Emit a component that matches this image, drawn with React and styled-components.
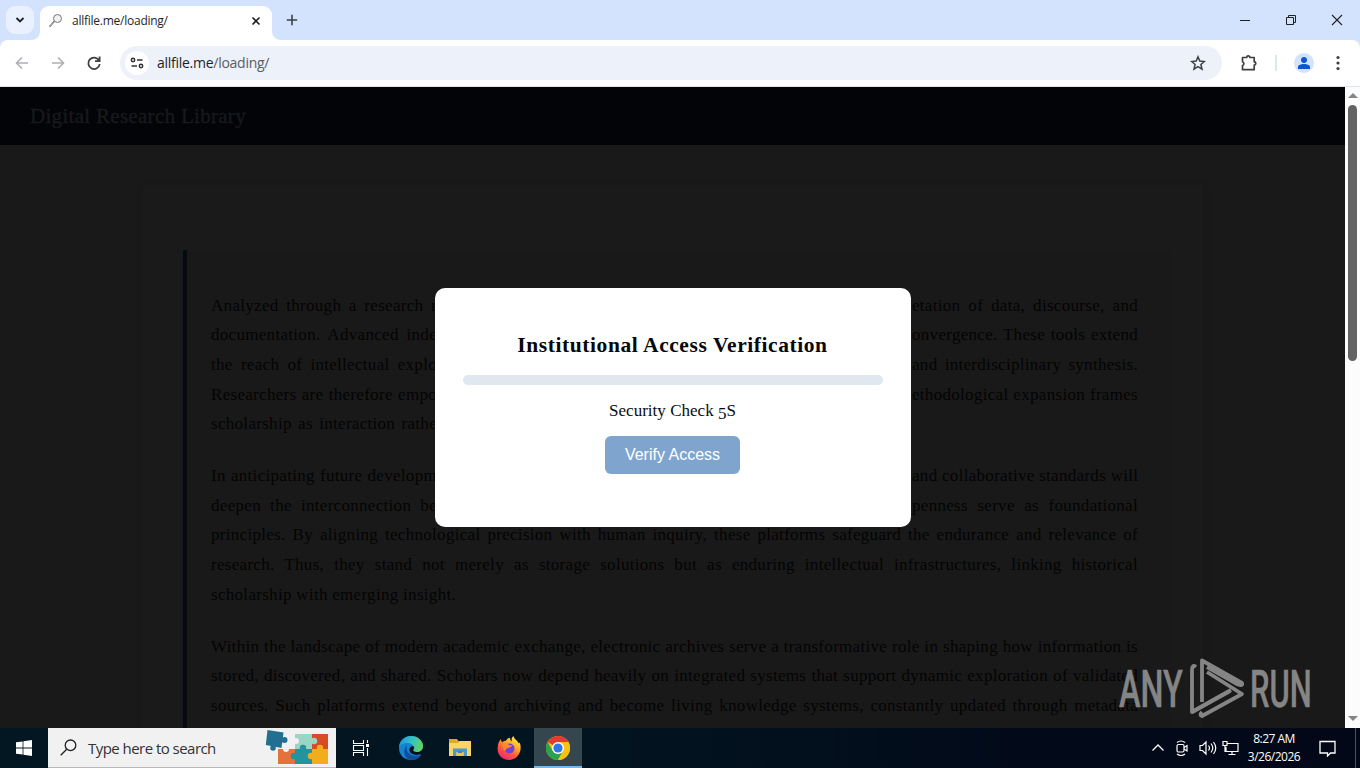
import React from "react";
import styled, { createGlobalStyle } from "styled-components";

const GlobalStyle = createGlobalStyle`
  * {
    box-sizing: border-box;
  }
  body {
    margin: 0;
    overflow: hidden;
    background: #191919;
  }
  svg {
    display: block;
    flex: none;
  }
`;

const uiFont = `"Open Sans", "Noto Sans", sans-serif`;
const serifFont = `"Liberation Serif", serif`;

const Screen = styled.div`
  display: flex;
  flex-direction: column;
  width: 1360px;
  height: 768px;
  overflow: hidden;
  font-family: ${uiFont};
`;

/* browser chrome */
const Chromium = styled.div`
  background: #d3e3fd;
`;
const TabStrip = styled.div`
  display: flex;
  height: 40px;
  padding: 6px 0 0 6px;
`;
const TabSearch = styled.div`
  display: flex;
  align-items: center;
  justify-content: center;
  width: 28px;
  height: 28px;
  border-radius: 9px;
  background: #e9f1fe;
`;
const Tab = styled.div`
  position: relative;
  display: flex;
  align-items: center;
  width: 232px;
  height: 34px;
  margin-left: 6px;
  padding: 0 10px 5px 8px;
  border-radius: 9px 9px 0 0;
  background: #fff;
  &::before,
  &::after {
    content: "";
    position: absolute;
    bottom: 0;
    width: 8px;
    height: 8px;
  }
  &::before {
    left: -8px;
    background: radial-gradient(circle at 0 0, transparent 7.5px, #fff 8px);
  }
  &::after {
    right: -8px;
    background: radial-gradient(circle at 100% 0, transparent 7.5px, #fff 8px);
  }
`;
const TabTitle = styled.span`
  flex: 1;
  margin-left: 8px;
  font-size: 12px;
  letter-spacing: -0.25px;
  white-space: nowrap;
  color: #1f1f1f;
`;
const NewTab = styled.div`
  margin: 8px 0 0 14px;
`;
const WindowButtons = styled.div`
  display: flex;
  align-items: center;
  gap: 34px;
  height: 28px;
  margin-left: auto;
  padding-right: 17px;
`;
const Toolbar = styled.div`
  display: flex;
  align-items: center;
  height: 47px;
  padding: 0 14px 0 14px;
  background: #fff;
  border-radius: 8px 8px 0 0;
  border-bottom: 1px solid #dfe3ea;
`;
const NavIcons = styled.div`
  display: flex;
  align-items: center;
  gap: 20px;
`;
const AddressBar = styled.div`
  display: flex;
  align-items: center;
  width: 1102px;
  height: 34px;
  margin-left: 18px;
  padding: 0 16px 0 5px;
  border-radius: 17px;
  background: #edf1fa;
`;
const SiteInfo = styled.div`
  display: flex;
  align-items: center;
  justify-content: center;
  width: 24px;
  height: 24px;
  border-radius: 50%;
  background: #fff;
`;
const Url = styled.span`
  flex: 1;
  margin: -1px 0 0 8px;
  font-size: 14px;
  letter-spacing: -0.27px;
  color: #1f1f1f;
  span {
    color: #5a5d61;
  }
`;
const ToolbarEnd = styled.div`
  display: flex;
  align-items: center;
  flex: 1;
  padding-left: 18px;
`;
const Divider = styled.div`
  width: 2px;
  height: 16px;
  margin: 0 17px;
  background: #dfe5f0;
`;
const Avatar = styled.div`
  display: flex;
  align-items: center;
  justify-content: center;
  width: 20px;
  height: 20px;
  margin-right: auto;
  border-radius: 50%;
  background: #d3e3fd;
`;

/* page */
const Viewport = styled.div`
  position: relative;
  display: flex;
  height: 641px;
  overflow: hidden;
`;
const Page = styled.div`
  flex: 1;
  background: #191919;
  font-family: ${serifFont};
`;
const Header = styled.header`
  display: flex;
  align-items: center;
  height: 58px;
  padding: 0 30px;
  background: #020408;
`;
const SiteName = styled.div`
  font-size: 21px;
  letter-spacing: 0.3px;
  color: #17191c;
  -webkit-text-stroke: 0.4px #17191c;
`;
const Sheet = styled.main`
  width: 1060px;
  height: 583px;
  margin: 40px 0 0 143px;
  padding: 65px 32px 0 40px;
  background: #1a1a1a;
  box-shadow: 0 0 8px rgba(0, 0, 0, 0.08);
`;
const Article = styled.article`
  height: 520px;
  padding: 40.8px 33px 0 24px;
  border-left: 4px solid #040a0f;
  background: #191919;
`;
const Paragraph = styled.div`
  margin-bottom: 22.4px;
`;
const Line = styled.div`
  display: flex;
  justify-content: space-between;
  height: 29.6px;
  font-size: 17px;
  line-height: 29.6px;
  color: #040404;
`;
const Segment = styled.span`
  width: ${({ $width }) => $width}px;
  text-align: justify;
  text-align-last: justify;
  white-space: nowrap;
  letter-spacing: 0.3px;
`;

const ScrollTrack = styled.div`
  display: flex;
  flex-direction: column;
  align-items: center;
  width: 15px;
  padding: 6px 0 7px;
  background: #fcfcfc;
`;
const ScrollThumb = styled.div`
  width: 9px;
  height: 256px;
  margin: 7px 0 auto;
  border-radius: 5px;
  background: #636363;
`;
const ScrollArrow = styled.div`
  border: 5px solid transparent;
  border-top-width: ${({ $down }) => ($down ? 5 : 0)}px;
  border-bottom-width: ${({ $down }) => ($down ? 0 : 5)}px;
  border-${({ $down }) => ($down ? "top" : "bottom")}-color: #858585;
`;

const Modal = styled.div`
  position: absolute;
  left: 435px;
  top: 201px;
  display: flex;
  flex-direction: column;
  align-items: center;
  width: 476px;
  height: 239px;
  padding: 45px 29px 0 28px;
  border-radius: 10px;
  background: #fff;
  font-family: ${serifFont};
`;
const ModalTitle = styled.h3`
  margin: 0;
  font-size: 21.5px;
  line-height: 24px;
  letter-spacing: 0.57px;
  white-space: nowrap;
  color: #080808;
`;
const Progress = styled.div`
  width: 420px;
  height: 10px;
  margin-top: 18px;
  border-radius: 5px;
  background: #e1e7ef;
`;
const Status = styled.p`
  margin: 16px 0 0;
  font-size: 17px;
  line-height: 20px;
  letter-spacing: 0.02px;
  color: #0c0c0c;
  span {
    vertical-align: -3px;
    line-height: 0;
  }
`;
const VerifyButton = styled.button`
  width: 135px;
  height: 38px;
  margin-top: 15px;
  padding: 0;
  border: none;
  border-radius: 6px;
  background: #7fa5cf;
  color: #fff;
  font-family: "Liberation Sans", sans-serif;
  font-size: 16px;
`;
const Watermark = styled.div`
  position: absolute;
  left: 1110px;
  top: 563px;
`;

/* taskbar */
const Taskbar = styled.div`
  display: flex;
  height: 40px;
  background: linear-gradient(90deg, #021722 0%, #02141f 45%, #020a1a 75%, #020818 100%);
`;
const TaskButton = styled.div`
  display: flex;
  align-items: center;
  justify-content: center;
  width: ${({ $width }) => $width || 49}px;
  height: 40px;
  background: ${({ $active }) => ($active ? "#36464f" : "transparent")};
  box-shadow: ${({ $active }) => ($active ? "inset 0 -2px #76b9ed" : "none")};
`;
const SearchBox = styled.div`
  display: flex;
  align-items: center;
  width: 288px;
  height: 40px;
  padding: 0 7px 0 12px;
  border-bottom: 1px solid #b9b9b9;
  background: #f1f1f1;
`;
const SearchText = styled.span`
  flex: 1;
  margin-left: 11px;
  font-size: 15px;
  letter-spacing: -0.54px;
  white-space: nowrap;
  color: #333;
`;
const Tray = styled.div`
  display: flex;
  align-items: center;
  margin-left: auto;
`;
const Clock = styled.div`
  width: 60px;
  margin-right: 15px;
  text-align: center;
  font-size: 12px;
  line-height: 18px;
  letter-spacing: -0.5px;
  white-space: nowrap;
  color: #fff;
`;
const ShowDesktop = styled.div`
  width: 5px;
  height: 40px;
  margin-left: 19px;
  border-left: 1px solid #4a505c;
`;

const Glyph = ({ w = 16, h = 16, sw = 1.6, stroke = "#202124", children }) => (
  <svg width={w} height={h} viewBox={`0 0 ${w} ${h}`} fill="none" stroke={stroke} strokeWidth={sw}>
    {children}
  </svg>
);

const Puzzle = () => (
  <svg width="64" height="38" viewBox="0 0 64 38">
    <path d="M13 20h17v15H13z" fill="#e3733c" />
    <path d="M30 5h17v15H30z" fill="#9bd5c6" />
    <path d="M47 5h16v15H47z" fill="#d94b25" />
    <path d="M30 20h17v15H30z" fill="#23939e" />
    <path d="M47 20h16v15H47z" fill="#f2ad1c" />
    <circle cx="31" cy="12" r="3" fill="#f1f1f1" />
    <circle cx="49" cy="12" r="3.200" fill="#9bd5c6" />
    <circle cx="38" cy="19" r="3.200" fill="#23939e" />
    <circle cx="55" cy="19" r="3.200" fill="#f2ad1c" />
    <circle cx="29" cy="27" r="3.200" fill="#23939e" />
    <circle cx="46" cy="27" r="3.200" fill="#f2ad1c" />
    <circle cx="21" cy="20" r="3" fill="#f1f1f1" />
    <g fill="#236f91">
      <path d="M2.500 1L18.500 3.500 16.500 19 .8 16z" />
      <circle cx="19.500" cy="11" r="3" />
      <circle cx="8" cy="19" r="2.800" />
    </g>
  </svg>
);

const Edge = () => (
  <svg width="24" height="24" viewBox="0 0 24 24">
    <defs>
      <linearGradient id="edgeTop" x1="0" x2="1" y1=".3" y2=".5">
        <stop offset="0" stopColor="#1c95d8" />
        <stop offset=".5" stopColor="#33c1c8" />
        <stop offset="1" stopColor="#66d35b" />
      </linearGradient>
    </defs>
    <path d="M0 12C0 5 5 0 12 0s12 5 12 10c0 3-2 5.500-5 6l3 3c-2 3-6 5-10 5C5 24 0 19 0 12z" fill="#1583d2" />
    <path d="M0 11C1 4 6 0 12 0c7 0 12 5 12 10 0 4-3 6-6 6-4 0-5-1-4-3 1-3-1-6-5-6-5 0-8 2-9 4z" fill="url(#edgeTop)" />
    <path d="M8 9c-2 6 3 13 14 10-2 4-7 6-12 5C4 20 4 13 8 9z" fill="#104f9b" />
    <path d="M14 10c-4 .5-5 5-1.500 7.500 3 2 7 1.700 10.500 0V15c-2 1.200-5 1.300-7 .8-2-.5-2-1.600-1.200-2.800.7-1.300.4-2.500-.8-3z" fill="#02141f" />
  </svg>
);

const Folder = () => (
  <svg width="22" height="20" viewBox="0 0 22 20">
    <path d="M0 1h8l1.500 2H22v15H0z" fill="#e7a526" />
    <path d="M0 5h9l2-2h11v15H0z" fill="#fbd467" />
    <path d="M4 10.500h14V18h-3.500v-4h-7v4H4z" fill="#4a98cc" />
    <path d="M7.500 14h7v4h-7z" fill="#f1c14d" />
    <path d="M9 13h4v2H9z" fill="#3984b7" />
  </svg>
);

const Firefox = () => (
  <svg width="24" height="24" viewBox="0 0 24 24">
    <defs>
      <linearGradient id="fox" x1=".8" x2=".2" y1="0" y2="1">
        <stop offset="0" stopColor="#fff04a" />
        <stop offset=".35" stopColor="#ffab26" />
        <stop offset=".65" stopColor="#ff563c" />
        <stop offset="1" stopColor="#e5207a" />
      </linearGradient>
    </defs>
    <path d="M4 3c0 1.500.5 2.500 1.300 3.300C6.500 5 8 4.700 9 4.700 10 2.500 12 1.500 13 1.700 13 4 14 5 15 5.400 14 3 15 1 16.500 0c.5 3 4 4.500 5.500 7.500l.8-.9C24 10 24 14 22.500 17 20 22 16 24 12 24 5.500 24 0 19 .6 12 .8 8 2 5 4 3z" fill="url(#fox)" />
    <circle cx="12.500" cy="12.500" r="5" fill="#7440d6" />
    <path d="M6 9c3-2 5-1 6 0l3 .5c0 1.500-3 1.500-3.500 2.500-2 0-3 1-3 3C6 14 5.500 11 6 9z" fill="#ff8b2c" />
  </svg>
);

const Chrome = () => (
  <svg width="24" height="24" viewBox="0 0 24 24">
    <circle cx="12" cy="12" r="12" fill="#fbc116" />
    <path d="M12 12L1.600 6A12 12 0 0122.400 6z" fill="#e33b2e" />
    <path d="M1.600 6A12 12 0 0012 24l5.200-9L12 12 6.800 15z" fill="#2ba24c" />
    <path d="M12 6h10.400A12 12 0 0112 24l5.200-9z" fill="#fbc116" />
    <circle cx="12" cy="12" r="6" fill="#fff" />
    <circle cx="12" cy="12" r="4.600" fill="#2f76e8" />
  </svg>
);

const paragraphs = [
  [
    ["Analyzed through a research r", "etation of data, discourse, and"],
    ["documentation. Advanced inde", "onvergence. These tools extend"],
    ["the reach of intellectual explo", "and interdisciplinary synthesis."],
    ["Researchers are therefore empo", "ethodological expansion frames"],
    ["scholarship as interaction rathe"],
  ],
  [
    ["In anticipating future developm", "and collaborative standards will"],
    ["deepen the interconnection be", "penness serve as foundational"],
    ["principles. By aligning technological precision with human inquiry, these platforms safeguard the endurance and relevance of"],
    ["research. Thus, they stand not merely as storage solutions but as enduring intellectual infrastructures, linking historical"],
    ["scholarship with emerging insight."],
  ],
  [
    ["Within the landscape of modern academic exchange, electronic archives serve a transformative role in shaping how information is"],
    ["stored, discovered, and shared. Scholars now depend heavily on integrated systems that support dynamic exploration of validated"],
    ["sources. Such platforms extend beyond archiving and become living knowledge systems, constantly updated through metadata"],
  ],
];

const segmentWidth = (text) => {
  if (text.length > 80) return 927;
  return text.endsWith("insight.") ? 244 : 226;
};

const App = () => (
  <>
    <GlobalStyle />
    <Screen>
      <Chromium>
        <TabStrip>
          <TabSearch>
            <Glyph w={10} h={8} sw={1.8}><path d="M1.500 2l3.500 3.500L8.500 2" /></Glyph>
          </TabSearch>
          <Tab>
            <Glyph w={16} h={16} sw={1} stroke="#777">
              <circle cx="9.500" cy="5.500" r="4" fill="#f1f1f1" />
              <path d="M6.500 8.500L2 14M6 8l-4.500 5 1 1" />
            </Glyph>
            <TabTitle>allfile.me/loading/</TabTitle>
            <Glyph w={12} h={12} sw={1.6}><path d="M2.500 2.500l7 7M9.500 2.500l-7 7" /></Glyph>
          </Tab>
          <NewTab>
            <Glyph w={12} h={12} sw={1.6} stroke="#3c4043"><path d="M6 .8v10.400M.8 6h10.400" /></Glyph>
          </NewTab>
          <WindowButtons>
            <Glyph w={12} h={12} sw={1}><path d="M1 6.500h10" /></Glyph>
            <Glyph w={12} h={12} sw={1}>
              <path d="M1.500 3.500h7v7h-7zM3.500 3.500v-2h7v7h-2" />
            </Glyph>
            <Glyph w={12} h={12} sw={1.1}><path d="M1 1l10 10M11 1L1 11" /></Glyph>
          </WindowButtons>
        </TabStrip>
        <Toolbar>
          <NavIcons>
            <Glyph stroke="#adafb2"><path d="M14 8H3M8 2.500L2.500 8 8 13.500" /></Glyph>
            <Glyph stroke="#adafb2"><path d="M2 8h11M8 2.500L13.500 8 8 13.500" /></Glyph>
            <Glyph sw={1.8} stroke="#3c4043">
              <path d="M13 5.500A5.700 5.700 0 1013.700 9M13.600 1.500v4.600H9" />
            </Glyph>
          </NavIcons>
          <AddressBar>
            <SiteInfo>
              <Glyph w={14} h={12} sw={1.5} stroke="#303235">
                <circle cx="3" cy="3" r="1.700" />
                <path d="M7 3h5.500M1.500 9H7" />
                <circle cx="11" cy="9" r="1.700" />
              </Glyph>
            </SiteInfo>
            <Url>allfile.me<span>/loading/</span></Url>
            <Glyph sw={1.5} stroke="#3c4043">
              <path d="M8 1.800l1.800 4.300 4.600.4-3.500 3 1.100 4.600L8 11.700l-4 2.400 1.100-4.600-3.500-3 4.600-.4z" />
            </Glyph>
          </AddressBar>
          <ToolbarEnd>
            <Glyph w={18} h={18} sw={1.7} stroke="#3c4043">
              <path d="M2.500 3.500h4.200a1.600 1.600 0 013.200 0h4.300v4.300a1.600 1.600 0 010 3.200v4.700H2.500v-4.200a2 2 0 000-3.800z" strokeLinejoin="round" />
            </Glyph>
            <Divider />
            <Avatar>
              <svg width="12" height="12" viewBox="0 0 12 12" fill="#0b57d0">
                <circle cx="6" cy="3" r="3" />
                <path d="M0 12v-2c0-2 3-3 6-3s6 1 6 3v2z" />
              </svg>
            </Avatar>
            <svg width="16" height="16" viewBox="0 0 16 16" fill="#3c4043">
              <circle cx="8" cy="2.500" r="1.600" />
              <circle cx="8" cy="8" r="1.600" />
              <circle cx="8" cy="13.500" r="1.600" />
            </svg>
          </ToolbarEnd>
        </Toolbar>
      </Chromium>

      <Viewport>
        <Page>
          <Header>
            <SiteName>Digital Research Library</SiteName>
          </Header>
          <Sheet>
            <Article>
              {paragraphs.map((lines, i) => (
                <Paragraph key={i}>
                  {lines.map((parts) => (
                    <Line key={parts[0]}>
                      {parts.map((text) => (
                        <Segment key={text} $width={segmentWidth(text)}>{text}</Segment>
                      ))}
                    </Line>
                  ))}
                </Paragraph>
              ))}
            </Article>
          </Sheet>
        </Page>
        <ScrollTrack>
          <ScrollArrow />
          <ScrollThumb />
          <ScrollArrow $down />
        </ScrollTrack>
        <Modal>
          <ModalTitle>Institutional Access Verification</ModalTitle>
          <Progress />
          <Status>Security Check <span>5</span>S</Status>
          <VerifyButton>Verify Access</VerifyButton>
        </Modal>
        <Watermark>
          <svg width="220" height="76" viewBox="0 0 220 76" fill="none" stroke="#858585" strokeWidth="3.800">
            <g fill="#858585" stroke="#858585" strokeWidth=".5" fontFamily="Roboto, sans-serif" fontSize="52" fontWeight="500">
              <text transform="translate(9 57) scale(.62 1)" textLength="103" lengthAdjust="spacingAndGlyphs">ANY</text>
              <text transform="translate(140 57) scale(.6 1)" textLength="103" lengthAdjust="spacingAndGlyphs">RUN</text>
            </g>
            <path d="M86 17q-4-3-4 3v42l39-22" strokeLinejoin="round" />
            <path d="M92 52V10.500L132 33q1 3-4 1.500L97 17" strokeLinejoin="round" />
            <path d="M97 22l35 22-40 22q-3-1 0-4M82 62l38-21" strokeLinejoin="round" />
          </svg>
        </Watermark>
      </Viewport>

      <Taskbar>
        <TaskButton $width={48}>
          <svg width="16" height="16" viewBox="0 0 16 16" fill="#fff">
            <path d="M0 2.300l6.600-.9v6.200H0zM7.400 1.300L16 0v7.600H7.400zM0 8.400h6.600v6.200L0 13.700zM7.400 8.400H16V16l-8.600-1.200z" />
          </svg>
        </TaskButton>
        <SearchBox>
          <Glyph w={17} h={17} sw={1.3} stroke="#222">
            <circle cx="10.500" cy="6.300" r="5.300" />
            <path d="M6.700 10.200L.7 16.300" />
          </Glyph>
          <SearchText>Type here to search</SearchText>
          <Puzzle />
        </SearchBox>
        <TaskButton>
          <Glyph w={18} h={16} sw={1.1} stroke="#fff">
            <path d="M1.500 0v3.500h10V0M1.500 16v-3.500h10V16M1.500 5.500h10v5h-10zM15.500 0v3M15.500 8v8" />
            <path d="M14 4h3v3h-3z" fill="#fff" stroke="none" />
          </Glyph>
        </TaskButton>
        <TaskButton $width={52}><Edge /></TaskButton>
        <TaskButton $width={46}><Folder /></TaskButton>
        <TaskButton $width={51}><Firefox /></TaskButton>
        <TaskButton $width={48} $active><Chrome /></TaskButton>
        <Tray>
          <Glyph w={14} h={16} sw={1.3} stroke="#fff"><path d="M1.500 10.500L7 5l5.500 5.500" /></Glyph>
          <TaskButton $width={34}>
            <Glyph w={14} h={16} sw={1.2} stroke="#fff">
              <rect x="2" y="4.500" width="7" height="7.500" rx="1.500" />
              <path d="M9 7.500l3-2v5.500l-3-2M2 2.500q4-3 8 0M2 14q4 3 8 0" />
            </Glyph>
          </TaskButton>
          <Glyph w={18} h={16} sw={1.2} stroke="#fff">
            <path d="M1 5.500h2.500L7 2v12l-3.500-3.500H1zM9.500 5.500q2 2.500 0 5M12 3.500q3.500 4.500 0 9M14.500 2q4.500 6 0 12" />
          </Glyph>
          <TaskButton $width={27}>
            <Glyph w={17} h={16} sw={1.2} stroke="#fff">
              <path d="M5 3.500h11v8H4V7M10 11.500v3M6.500 14.500h7M1 1.500h4v4H1zM3 5.500v6.500" />
            </Glyph>
          </TaskButton>
          <Clock>
            8:27 AM
            <br />
            3/26/2026
          </Clock>
          <Glyph w={17} h={17} sw={1.3} stroke="#fff"><path d="M1 1.500h15v11.500h-4.500l-3 3v-3H1z" /></Glyph>
          <ShowDesktop />
        </Tray>
      </Taskbar>
    </Screen>
  </>
);

export default App;
